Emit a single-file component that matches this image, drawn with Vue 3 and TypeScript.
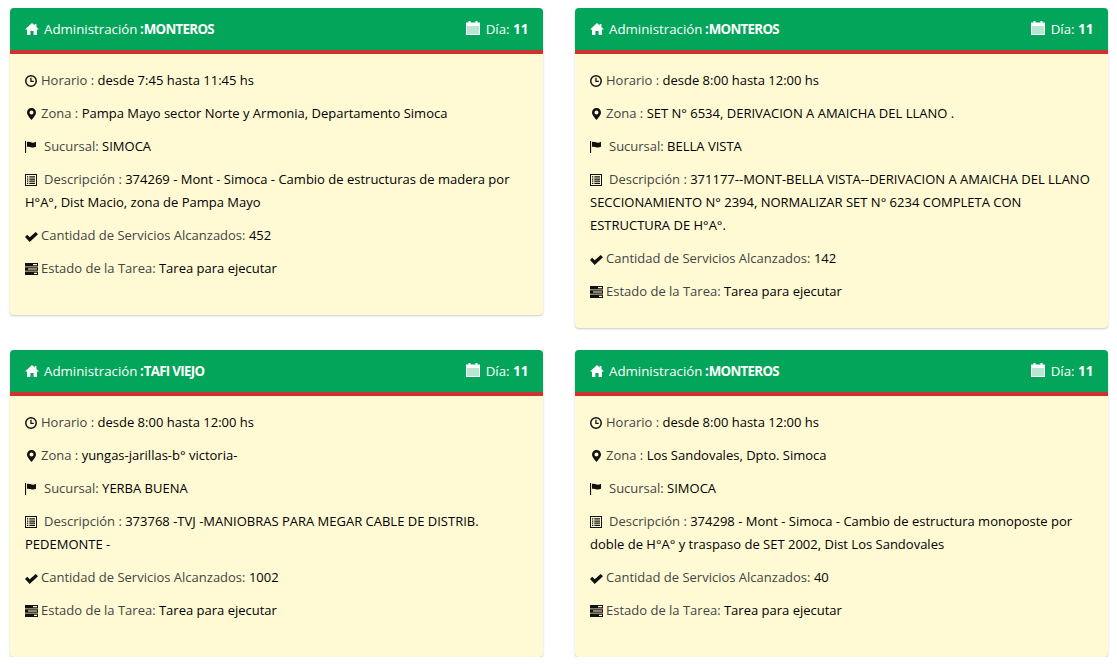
<script setup lang="ts">
interface Card {
  admin: string
  dia: string
  horario: string
  zona: string
  sucursal: string
  descripcion: string
  cantidad: string
  estado: string
}
const cards: Card[] = [
  { admin: 'MONTEROS', dia: '11', horario: 'desde 7:45 hasta 11:45 hs', zona: 'Pampa Mayo sector Norte y Armonia, Departamento Simoca', sucursal: 'SIMOCA', descripcion: '374269 - Mont - Simoca - Cambio de estructuras de madera por H°A°, Dist Macio, zona de Pampa Mayo', cantidad: '452', estado: 'Tarea para ejecutar' },
  { admin: 'MONTEROS', dia: '11', horario: 'desde 8:00 hasta 12:00 hs', zona: 'SET N° 6534, DERIVACION A AMAICHA DEL LLANO .', sucursal: 'BELLA VISTA', descripcion: '371177--MONT-BELLA VISTA--DERIVACION A AMAICHA DEL LLANO SECCIONAMIENTO N° 2394, NORMALIZAR SET N° 6234 COMPLETA CON ESTRUCTURA DE H°A°.', cantidad: '142', estado: 'Tarea para ejecutar' },
  { admin: 'TAFI VIEJO', dia: '11', horario: 'desde 8:00 hasta 12:00 hs', zona: 'yungas-jarillas-b° victoria-', sucursal: 'YERBA BUENA', descripcion: '373768 -TVJ -MANIOBRAS PARA MEGAR CABLE DE DISTRIB. PEDEMONTE -', cantidad: '1002', estado: 'Tarea para ejecutar' },
  { admin: 'MONTEROS', dia: '11', horario: 'desde 8:00 hasta 12:00 hs', zona: 'Los Sandovales, Dpto. Simoca', sucursal: 'SIMOCA', descripcion: '374298 - Mont - Simoca - Cambio de estructura monoposte por doble de H°A° y traspaso de SET 2002, Dist Los Sandovales', cantidad: '40', estado: 'Tarea para ejecutar' }
]
</script>

<template>
  <main class="grid">
    <article v-for="(c, i) in cards" :key="i" class="card">
      <header class="head">
        <span class="head-left">
          <svg class="ic home" viewBox="0 0 14 12"><path d="M7 0 L9.6 2.4 V1 H11.4 V4 L14 6.5 H12 V12 H8.6 V8 H5.4 V12 H2 V6.5 H0 Z" /></svg>
          <span class="adm">Administración <b class="semi">:</b><b class="name">{{ c.admin }}</b></span>
        </span>
        <span class="head-right">
          <svg class="ic cal" viewBox="0 0 14 14"><path d="M2.500 0H4.500V1.500H9.500V0H11.500V1.500H14V5H0V1.500H2.500Z" /><path opacity=".72" d="M0 5H14V14H0Z" /><path d="M0 13H14V14H0ZM0 5H1V14H0ZM13 5H14V14H13Z" /></svg>
          <span class="dia">Día: <b>{{ c.dia }}</b></span>
        </span>
      </header>
      <div class="body">
        <p><svg class="ic i1" viewBox="0 0 12 12"><path fill-rule="evenodd" d="M6 0a6 6 0 1 1 0 12A6 6 0 0 1 6 0Zm0 1.500a4.500 4.500 0 1 0 0 9 4.500 4.500 0 0 0 0-9Z" /><path d="M5.300 2.800h1.300v3h2.200v1.300H5.300Z" /></svg><span class="lb">Horario : </span><span class="val">{{ c.horario }}</span></p>
        <p><svg class="ic i2" viewBox="0 0 9 12"><path fill-rule="evenodd" d="M4.500 0A4.400 4.400 0 0 1 9 4.400C9 7 6 10 4.500 12 3 10 0 7 0 4.400A4.400 4.400 0 0 1 4.500 0Zm0 2.400a2 2 0 1 0 0 4 2 2 0 0 0 0-4Z" /></svg><span class="lb">Zona : </span><span class="val">{{ c.zona }}</span></p>
        <p><svg class="ic i3" viewBox="0 0 11 12"><path d="M0 0h1.100v12H0zM2 1C3.300.5 4.500.8 6 1.300S9 1.800 11 .8V5.800C9 6.800 7.500 6.700 6 6.200S3.300 5.500 2 6Z" /></svg><span class="lb">Sucursal: </span><span class="val">{{ c.sucursal }}</span></p>
        <p><svg class="ic i4" viewBox="0 0 12 12"><path fill-rule="evenodd" d="M0 0h12v12H0ZM1 1v10h10V1Z" /><path d="M2 2.300h1.300v1.200H2zM4.300 2.300H10v1.200H4.300zM2 4.500h1.300v1.200H2zM4.300 4.500H10v1.200H4.300zM2 6.600h1.300v1.200H2zM4.300 6.600H10v1.200H4.300zM2 8.700h1.300v1.200H2zM4.300 8.700H10v1.200H4.300z" /></svg><span class="lb">Descripción : </span><span class="val">{{ c.descripcion }}</span></p>
        <p><svg class="ic i5" viewBox="0 0 13 10"><path d="M0 5 2.200 2.800 4.700 5.300 10.700 0 13 2.200 4.700 10Z" /></svg><span class="lb">Cantidad de Servicios Alcanzados: </span><span class="val">{{ c.cantidad }}</span></p>
        <p><svg class="ic i6" viewBox="0 0 13 12"><path fill-rule="evenodd" d="M0 0h13v3.400H0ZM8 1.100v1.200h4V1.100Z M0 4.300h13v3.400H0ZM3 5.400v1.200h9V5.400Z M0 8.600h13V12H0ZM9 9.700v1.200h3V9.700Z" /></svg><span class="lb">Estado de la Tarea: </span><span class="val">{{ c.estado }}</span></p>
      </div>
    </article>
  </main>
</template>

<style scoped>
.grid {
  display: grid;
  grid-template-columns: 533px 533px;
  column-gap: 32px;
  row-gap: 22px;
  align-items: start;
  padding: 8px 0 0 10px;
  font-family: "Open Sans", "DejaVu Sans", sans-serif;
  font-size: 13px;
  line-height: 23px;
}
.card {
  box-sizing: border-box;
  min-height: 307px;
  background: #fffad4;
  border-radius: 4px;
  box-shadow: 0 1px 2px rgba(60, 90, 60, 0.3);
  overflow: hidden;
}
.head {
  box-sizing: border-box;
  display: flex;
  justify-content: space-between;
  align-items: center;
  height: 46px;
  padding: 0 14.5px 0 15px;
  background: #02a55a;
  border-bottom: 4px solid #d2322d;
  color: #fff;
  font-size: 13.3px;
}
.head-left, .head-right {
  display: flex;
  align-items: center;
}
.ic {
  fill: currentColor;
  flex: none;
}
.home { width: 14px; height: 12px; margin-right: 5px; margin-bottom: 1px; }
.cal { width: 14px; height: 14px; margin-right: 6px; margin-bottom: 2px; }
.name { font-weight: 700; letter-spacing: -0.7px; }
.semi { font-weight: 700; margin-left: -1px; }
.dia b { font-weight: 700; font-size: 13.5px; }
.body {
  padding: 15px;
  color: #444;
}
.body p {
  margin: 0 0 10px;
}
.body .ic {
  display: inline-block;
  vertical-align: -1.5px;
  color: #111;
}
.i1 { width: 12px; height: 12px; margin-right: 4px; }
.i2 { width: 9px; height: 12px; margin-left: 2px; margin-right: 5px; }
.i3 { width: 11px; height: 12px; margin-right: 8px; vertical-align: -2px; }
.i4 { width: 12px; height: 12px; margin-right: 7px; }
.i5 { width: 13px; height: 10px; margin-right: 3px; }
.i6 { width: 13px; height: 12px; margin-right: 3px; }
.val {
  color: #000;
  font-weight: 500;
}
</style>
